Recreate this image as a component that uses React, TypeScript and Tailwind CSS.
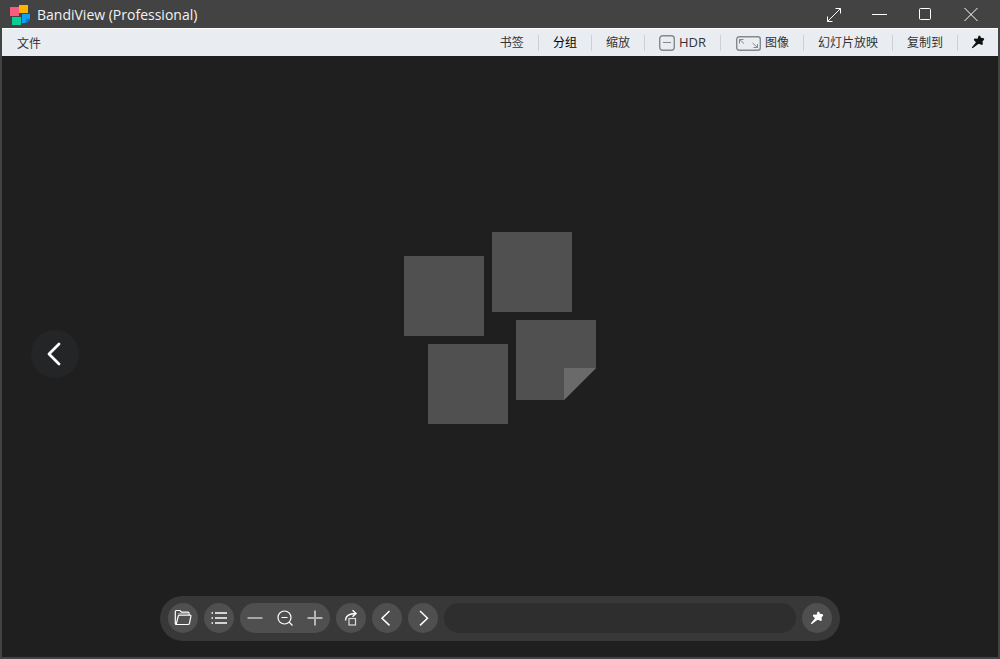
import type { ReactNode } from 'react';

function AppIcon() {
  return (
    <svg width="20" height="20" viewBox="0 0 20 20" aria-hidden="true">
      <rect x="0" y="2" width="9" height="9" fill="#fb5b7f" />
      <rect x="9" y="0" width="9" height="8" fill="#ffb400" />
      <rect x="2" y="12" width="9" height="8" fill="#09cf96" />
      <path d="M12 9h8v4.500c0 1.500-3 4.500-4.500 4.500H12z" fill="#12a0f2" />
      <path d="M16 14l4-.5c0 1.500-3 4.500-4.500 4.500z" fill="#0b78cc" />
    </svg>
  );
}

function PinIcon() {
  return (
    <svg width="14" height="14" viewBox="0 0 14 14" fill="currentColor" aria-hidden="true">
      <path d="M7.500 .8h1.600l.9 1.900 2.800.6.4 1.300-1.700 1.900.4 2.700-1 .9-2.500-1L7.300 9 1.600 13.200.8 12.400 5 7.200l-1.600-1.500-.6-1.200.8-.9 3 .1z" />
    </svg>
  );
}

function TitleBar() {
  return (
    <header className="flex h-7 items-center bg-[#434343] text-white">
      <div className="flex flex-1 items-center gap-[7px] pl-2 pt-px">
        <AppIcon />
        <h1 className="text-sm leading-5 text-[#f2f2f2]">BandiView (Professional)</h1>
      </div>
      <div className="flex h-7 pt-px pr-1">
        <button aria-label="Full screen" className="flex w-[46px] items-center justify-center">
          <svg width="16" height="16" viewBox="0 0 16 16" fill="none" stroke="currentColor">
            <path d="M2.500 14.500l13-13M10.500 1.500h5v5M2.500 9.500v5h5" />
          </svg>
        </button>
        <button aria-label="Minimize" className="flex w-[46px] items-center justify-center">
          <svg width="16" height="16" viewBox="0 0 16 16" fill="none" stroke="currentColor">
            <path d="M1 7.5h15" />
          </svg>
        </button>
        <button aria-label="Maximize" className="flex w-[46px] items-center justify-center">
          <svg width="16" height="16" viewBox="0 0 16 16" fill="none" stroke="currentColor">
            <rect x="2.5" y="1.5" width="11" height="11" rx="1" />
          </svg>
        </button>
        <button aria-label="Close" className="flex w-[46px] items-center justify-center">
          <svg width="16" height="16" viewBox="0 0 16 16" fill="none" stroke="currentColor">
            <path d="M1.500 1l13 13M14.500 1l-13 13" />
          </svg>
        </button>
      </div>
    </header>
  );
}

function MenuItem({ children, strong }: { children: ReactNode; strong?: boolean }) {
  return (
    <li className="flex items-center">
      <button
        className={`flex h-7 items-center gap-1 px-[14px] ${strong ? 'text-black' : 'text-[#333333]'}`}
      >
        {children}
      </button>
      <span className="h-4 w-px bg-[#cdd0d4]" />
    </li>
  );
}

function MenuBar() {
  return (
    <nav className="flex h-7 items-center justify-between border-t border-white bg-[#e9edf2] text-xs">
      <button className="h-7 px-[15px] pt-0.5 text-[#333333]">文件</button>
      <ul className="flex items-center">
        <MenuItem>书签</MenuItem>
        <MenuItem strong>分组</MenuItem>
        <MenuItem>缩放</MenuItem>
        <MenuItem>
          <svg width="16" height="16" viewBox="0 0 16 16" fill="none" stroke="#85888c">
            <rect x="0.7" y="0.7" width="14.6" height="14.6" rx="3" strokeWidth="1.4" />
            <path d="M4 7.5h8" />
          </svg>
          <span className="text-[13px]">HDR</span>
        </MenuItem>
        <MenuItem>
          <svg width="26" height="16" viewBox="0 0 26 16" fill="none" stroke="#85888c">
            <rect x="1.7" y="1.7" width="23.6" height="13.6" rx="2.5" strokeWidth="1.4" />
            <path d="M4.500 8.500V4.500H8.500M4.500 4.500l4.500 4M22.500 9v3.500H18.500M22.500 12.500l-5-4.500" />
          </svg>
          图像
        </MenuItem>
        <MenuItem>幻灯片放映</MenuItem>
        <MenuItem>复制到</MenuItem>
        <li>
          <button aria-label="Pin menu" className="flex h-7 items-center px-[13px] pb-0.5 text-[#111111]">
            <PinIcon />
          </button>
        </li>
      </ul>
    </nav>
  );
}

function EmptyLogo() {
  return (
    <svg width="192" height="192" viewBox="0 0 192 192" fill="#505050" aria-hidden="true">
      <rect x="0" y="24" width="80" height="80" />
      <rect x="88" y="0" width="80" height="80" />
      <rect x="24" y="112" width="80" height="80" />
      <path d="M112 88h80v48l-32 32h-48z" />
      <path d="M160 136h32l-32 32z" fill="#6a6a6a" />
    </svg>
  );
}

function ToolButton({ label, children }: { label: string; children: ReactNode }) {
  return (
    <button
      aria-label={label}
      className="flex size-[30px] shrink-0 items-center justify-center rounded-full bg-[#4f4f4f]"
    >
      {children}
    </button>
  );
}

function Icon({ children }: { children: ReactNode }) {
  return (
    <svg width="18" height="18" viewBox="0 0 18 18" fill="none" stroke="currentColor" strokeWidth="1.2">
      {children}
    </svg>
  );
}

function Toolbar() {
  return (
    <div
      role="toolbar"
      className="flex w-full max-w-[680px] gap-1.5 rounded-full bg-[#383838] px-2 pt-[7px] pb-2 text-white"
    >
      <ToolButton label="Open">
        <Icon>
          <path d="M2.200 15.500h12c.6 0 1-.3 1.200-.9l1.500-7.400c.1-.7-.2-1.100-.8-1.100H5.500c-.6 0-1 .3-1.200.9L2.200 15.500c-.5 0-.9-.5-.9-1.200V2.600c0-.7.4-1.100 1-1.100h3.600l1.600 1.600h6.500c.7 0 1 .4 1 1v2" />
          <path d="M4 4.600h10.500" stroke="#9a9a9a" />
        </Icon>
      </ToolButton>
      <ToolButton label="List">
        <Icon>
          <path d="M5 4h12M5 9h12M5 14h12M1.500 4H3M1.500 9H3M1.500 14H3" strokeWidth="1.400" />
        </Icon>
      </ToolButton>
      <div className="flex shrink-0 rounded-full bg-[#4f4f4f]">
        <button aria-label="Zoom out" className="flex size-[30px] items-center justify-center">
          <Icon>
            <path d="M1.500 9h15" stroke="#a6a6a6" strokeWidth="2" />
          </Icon>
        </button>
        <button aria-label="Zoom" className="flex size-[30px] items-center justify-center">
          <Icon>
            <circle cx="8.500" cy="8.500" r="6.500" />
            <path d="M5.500 8.500h6M13 13l3.500 3.500" />
          </Icon>
        </button>
        <button aria-label="Zoom in" className="flex size-[30px] items-center justify-center">
          <Icon>
            <path d="M1.500 9h15M9 1.500v15" stroke="#b4b4b4" strokeWidth="2" />
          </Icon>
        </button>
      </div>
      <ToolButton label="Rotate">
        <Icon>
          <path d="M3.500 11.500C3.500 7 6.500 4.500 14 4.500M10.500 1.200l3.500 3.300-3.500 3.300" strokeWidth="1.400" />
          <rect x="7" y="9.500" width="6.500" height="6.500" stroke="#dddddd" />
        </Icon>
      </ToolButton>
      <ToolButton label="Previous">
        <Icon>
          <path d="M11.500 2L4 9.200l7.500 7.200" strokeWidth="1.500" />
        </Icon>
      </ToolButton>
      <ToolButton label="Next">
        <Icon>
          <path d="M6 2l7.500 7.200L6 16.400" strokeWidth="1.500" />
        </Icon>
      </ToolButton>
      <div className="flex-1 rounded-full bg-[#2e2e2e]" />
      <ToolButton label="Pin toolbar">
        <PinIcon />
      </ToolButton>
    </div>
  );
}

export default function App() {
  return (
    <div className="flex min-h-screen flex-col border-x-2 border-b-2 border-[#434343] bg-[#1f1f1f] font-['Open_Sans','Noto_Sans_CJK_SC',sans-serif]">
      <TitleBar />
      <MenuBar />
      <main className="relative flex flex-1 flex-col items-center pb-4">
        <div className="flex flex-1 items-center justify-center pt-1">
          <EmptyLogo />
        </div>
        <Toolbar />
        <button
          aria-label="Back"
          className="absolute top-1/2 left-[29px] -mt-[27px] flex size-12 items-center justify-center rounded-full bg-[#242527] text-white"
        >
          <svg width="24" height="24" viewBox="0 0 24 24" fill="none" stroke="currentColor" strokeWidth="2.8" strokeLinecap="round" strokeLinejoin="round">
            <path d="M16 2L6 12l10 10" />
          </svg>
        </button>
      </main>
    </div>
  );
}
